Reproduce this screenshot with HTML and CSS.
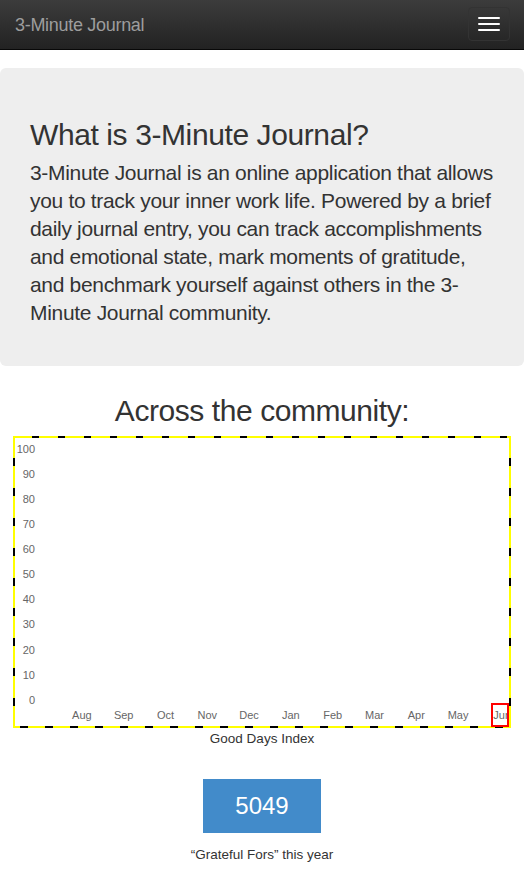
FILE: index.html
```html
<!DOCTYPE html>
<html>
<head>
<meta charset="utf-8">
<title>3-Minute Journal</title>
<link rel="stylesheet" href="styles.css">
</head>
<body>
<nav class="navbar">
  <a class="brand" href="#">3-Minute Journal</a>
  <button class="toggle" type="button" aria-label="Toggle navigation">
    <span class="bar"></span><span class="bar"></span><span class="bar"></span>
  </button>
</nav>

<section class="jumbotron">
  <h1 class="jumbo-title">What is 3-Minute Journal?</h1>
  <p class="jumbo-text">3-Minute Journal is an online application that allows you to track your inner work life. Powered by a brief daily journal entry, you can track accomplishments and emotional state, mark moments of gratitude, and benchmark yourself against others in the 3-Minute Journal community.</p>
</section>

<section class="community">
  <h2 class="community-title">Across the community:</h2>
  <div class="chart">
    <ul class="y-axis">
      <li>100</li><li>90</li><li>80</li><li>70</li><li>60</li><li>50</li><li>40</li><li>30</li><li>20</li><li>10</li><li>0</li>
    </ul>
    <ul class="x-axis">
      <li>Aug</li><li>Sep</li><li>Oct</li><li>Nov</li><li>Dec</li><li>Jan</li><li>Feb</li><li>Mar</li><li>Apr</li><li>May</li><li><span class="current">Jun</span></li>
    </ul>
  </div>
  <p class="chart-caption">Good Days Index</p>

  <div class="stat">
    <span class="stat-value">5049</span>
    <p class="stat-label">“Grateful Fors” this year</p>
  </div>
</section>
</body>
</html>
```

FILE: styles.css
```css
* { box-sizing: border-box; }

html, body {
  margin: 0;
  padding: 0;
  background: #fff;
  font-family: "Liberation Sans", Arial, Helvetica, sans-serif;
  color: #333;
}

.navbar {
  height: 50px;
  display: flex;
  align-items: center;
  justify-content: space-between;
  padding: 0 15px;
  background: linear-gradient(to bottom, #3c3c3c 0%, #222 100%);
  border-bottom: 1px solid #080808;
}

.brand {
  color: #9d9d9d;
  font-size: 18px;
  letter-spacing: -0.3px;
  line-height: 20px;
  text-decoration: none;
}

.toggle {
  width: 42px;
  height: 34px;
  margin-right: -1px;
  margin-top: -1px;
  padding: 9px 9px;
  display: flex;
  flex-direction: column;
  justify-content: space-between;
  align-items: center;
  background: transparent;
  border: 1px solid #333;
  border-radius: 4px;
}

.bar {
  display: block;
  width: 22px;
  height: 2px;
  background: #fff;
  border-radius: 1px;
}

.jumbotron {
  margin-top: 18px;
  padding: 30px 30px 31px 30px;
  background: #eee;
  border-radius: 6px;
}

.jumbo-title {
  margin: 20px 0 8px;
  font-size: 30px;
  font-weight: 500;
  letter-spacing: -0.4px;
  line-height: 33px;
  color: #333;
}

.jumbo-text {
  margin: 0 0 8px;
  font-size: 21px;
  letter-spacing: -0.32px;
  line-height: 28px;
  color: #333;
}

.community {
  padding: 0 13px;
  text-align: center;
}

.community-title {
  margin: 28px 0 9px;
  font-size: 30px;
  font-weight: 500;
  letter-spacing: -0.43px;
  line-height: 33px;
  color: #333;
}

.chart {
  height: 292px;
  display: grid;
  grid-template-rows: 265px 24px;
  border: 2px solid transparent;
  background:
    linear-gradient(#fff, #fff) padding-box,
    repeating-linear-gradient(90deg, #ff0 0 18.7px, #000 18.7px 26px, #ff0 26px 25px) left top / 100% 2px no-repeat border-box,
    repeating-linear-gradient(90deg, #ff0 0 7px, #000 7px 15px, #ff0 15px 25px) left bottom / 100% 2px no-repeat border-box,
    repeating-linear-gradient(180deg, #ff0 0 22px, #000 22px 30px, #ff0 30px 25px) left top / 2px 100% no-repeat border-box,
    repeating-linear-gradient(180deg, #ff0 0 22px, #000 22px 30px, #ff0 30px 25px) right top / 2px 100% no-repeat border-box;
  font-size: 11px;
  color: #666;
}

.y-axis {
  list-style: none;
  margin: -1.5px 0 0;
  padding: 0;
  width: 20px;
  text-align: right;
}

.y-axis li {
  height: 25.15px;
  line-height: 25.15px;
  color: #666;
}

.x-axis {
  list-style: none;
  margin: 0;
  padding: 0 0 0 46px;
  display: grid;
  grid-template-columns: repeat(11, 41.8px);
  align-items: center;
  justify-items: center;
  line-height: 24px;
  color: #666;
}

.current {
  display: block;
  width: 18px;
  height: 24px;
  line-height: 20px;
  border: 2px solid #f00;
  overflow: hidden;
  white-space: nowrap;
  text-align: left;
  margin-left: 1px;
}

.chart-caption {
  margin: 3px 0 0;
  font-size: 13.5px;
  line-height: 16px;
  color: #333;
}

.stat {
  margin-top: 32px;
  display: flex;
  flex-direction: column;
  align-items: center;
}

.stat-value {
  display: block;
  height: 54px;
  padding: 0 32px;
  line-height: 54px;
  font-size: 24px;
  color: #fff;
  background: #428bca;
}

.stat-label {
  margin: 13px 0 0;
  font-size: 13.5px;
  line-height: 18px;
  color: #333;
}
```
